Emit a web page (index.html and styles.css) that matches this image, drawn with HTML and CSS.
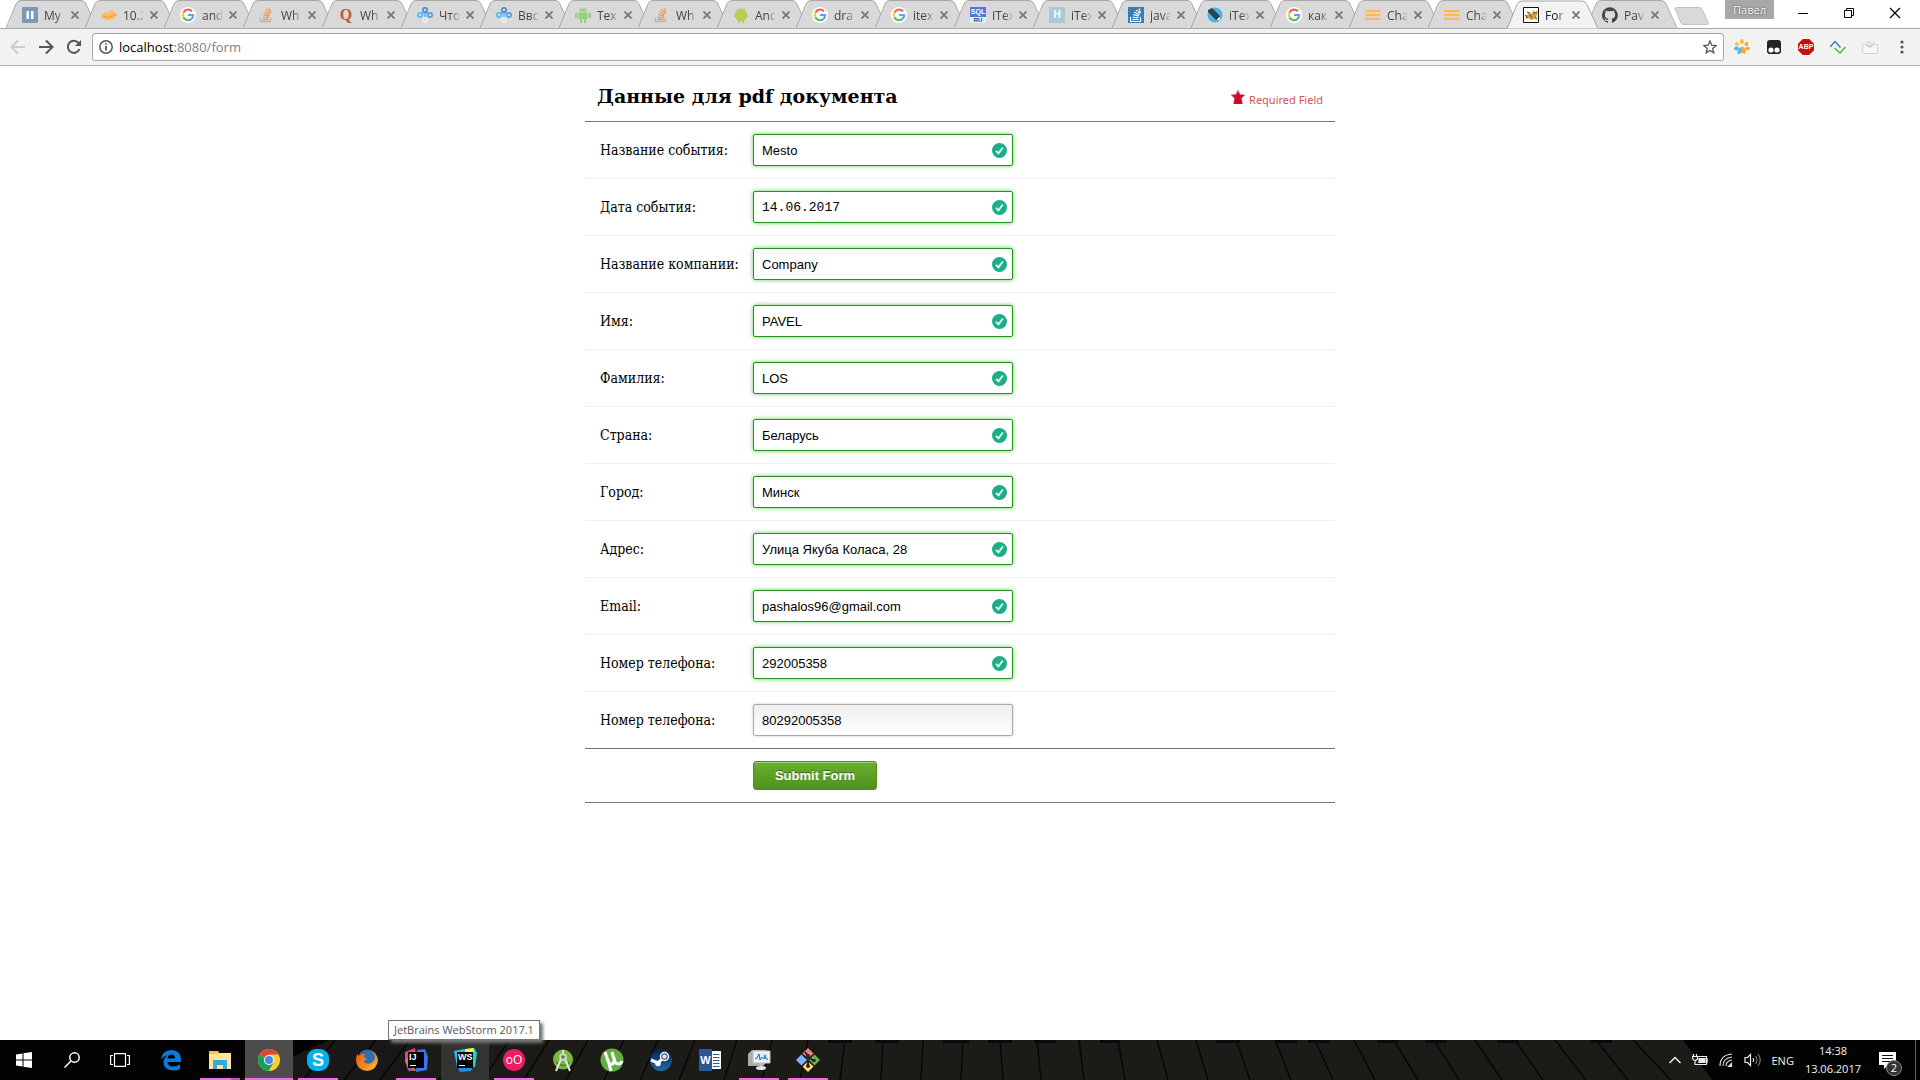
FILE: index.html
```html
<!DOCTYPE html>
<html lang="ru">
<head>
<meta charset="utf-8">
<title>Form</title>
<link rel="stylesheet" href="styles.css">
</head>
<body>
<svg class="defs" aria-hidden="true">
  <defs>
    <linearGradient id="lg-blue" x1="0" y1="0" x2="0" y2="1"><stop offset="0" stop-color="#0b2150"/><stop offset="1" stop-color="#1f6aa8"/></linearGradient>
    <linearGradient id="lg-fox" x1="0" y1="0" x2="1" y2="1"><stop offset="0" stop-color="#e8590c"/><stop offset=".6" stop-color="#f58a1f"/><stop offset="1" stop-color="#fdd33c"/></linearGradient>
  </defs>
  <symbol id="shape" viewBox="0 0 92 28"><path d="M0 28C1 27 2 25 3 23L10 4Q11.500.500 15 .500H75Q78.500.500 80 4L88 23Q90 27.500 92 28Z" stroke="none"/><path d="M0 28L10 4Q11.500.500 15 .500H75Q78.500.500 80 4L91 28" fill="none"/></symbol>
  <symbol id="x" viewBox="0 0 8 8"><path d="M.5.5l7 7M7.500.500l-7 7" stroke="#777" stroke-width="1.800"/></symbol>
  <symbol id="google" viewBox="0 0 16 16"><circle cx="8" cy="8" r="8" fill="#fff"/><g fill="none" stroke-width="2.200"><path d="M12 4.300A5.200 5.200 0 0 0 3.500 5.400" stroke="#ee675c"/><path d="M3.500 5.400A5.200 5.200 0 0 0 3.500 10.600" stroke="#fbc94a"/><path d="M3.500 10.600A5.200 5.200 0 0 0 11.500 11.900" stroke="#5bb974"/><path d="M11.500 11.900Q13.200 10.400 13.100 8H8" stroke="#669df6"/></g></symbol>
  <symbol id="stack" viewBox="0 0 16 16"><path d="M1.500 10.500v4h10v-4" fill="none" stroke="#b4b6b8" stroke-width="1.300"/><path d="M3.500 12.500h6M3.700 10.200l6 .7M4.300 7.600l5.800 1.700M5.200 4.800l5 3.300M7 2.300l4.300 4.700M9.800.800l2.200 5" stroke="#f29a5b" stroke-width="1.300"/></symbol>
  <symbol id="stackru" viewBox="0 0 16 16"><path d="M0 0h16v16H0z" fill="#3a7db3"/><path d="M2.500 10v4.500h10V10M4.500 12.500h6M4.500 10.200l6 .5M5 7.500l5.700 1.600M6.200 5l5 3M8.300 2.800l3.700 4M11 1.500l1.500 4.500" fill="none" stroke="#fff" stroke-width="1.100"/></symbol>
  <symbol id="dots3" viewBox="0 0 16 16"><g fill="none" stroke-width="1.800"><path d="M5 7l2-2M11 7L9 5M8 6v4" stroke="#5a9be0" stroke-width="1.200"/><circle cx="8" cy="3" r="2.200" stroke="#4d8fe0"/><circle cx="3" cy="8" r="2.200" stroke="#4fc0f5"/><circle cx="13" cy="8" r="2.200" stroke="#4da4ee"/><circle cx="8" cy="13" r="2.200" stroke="#ebebeb"/></g></symbol>
  <symbol id="android" viewBox="0 0 16 16"><path d="M4 4.500Q4.500 1.500 8 1.500T12 4.500z"/><path d="M3.500 5.500h9V12h-9zM0 6h2.500v5H0zM13.500 6H16v5h-2.500zM5 12h2v4H5zM9 12h2v4H9z"/><path d="M5 .5l1 2M11 .5l-1 2" stroke="#96cf80"/></symbol>
  <symbol id="lines" viewBox="0 0 16 16"><path d="M0 4.200h15.500M0 8h15.500M0 11.800h15.500" stroke="#fcb95b" stroke-width="2.200"/></symbol>
  <symbol id="ok" viewBox="0 0 16 16"><circle cx="8" cy="8" r="8" fill="#1cae88"/><path d="M4.300 8.300l2.600 2.700 4.700-6.200" fill="none" stroke="#e6faf4" stroke-width="2"/></symbol>
</svg>

<header class="browser">
  <div class="titlebar">
    <ul class="tabs">
      <li class="tab"><svg class="shape"><use href="#shape"/></svg><svg class="fav" viewBox="0 0 16 16"><rect width="16" height="16" rx="1" fill="#7b98b8"/><path d="M4.500 4h2.500v8H4.500zM9 4h2.500v8H9z" fill="#fff"/></svg><span class="name">My</span><svg class="x"><use href="#x"/></svg></li>
      <li class="tab"><svg class="shape"><use href="#shape"/></svg><svg class="fav" viewBox="0 0 16 16"><path d="M0 9Q2 5 7 5Q10 2 13 3L12 5Q16 6 16 8Q13 13 7 13Q1 13 0 9z" fill="#f9bd62"/><path d="M2 9Q8 12 15 7" stroke="#ee9b36" fill="none"/></svg><span class="name">10.2</span><svg class="x"><use href="#x"/></svg></li>
      <li class="tab"><svg class="shape"><use href="#shape"/></svg><svg class="fav"><use href="#google"/></svg><span class="name">and</span><svg class="x"><use href="#x"/></svg></li>
      <li class="tab"><svg class="shape"><use href="#shape"/></svg><svg class="fav"><use href="#stack"/></svg><span class="name">Wh</span><svg class="x"><use href="#x"/></svg></li>
      <li class="tab"><svg class="shape"><use href="#shape"/></svg><span class="fav quora">Q</span><span class="name">Wh</span><svg class="x"><use href="#x"/></svg></li>
      <li class="tab"><svg class="shape"><use href="#shape"/></svg><svg class="fav"><use href="#dots3"/></svg><span class="name">Что</span><svg class="x"><use href="#x"/></svg></li>
      <li class="tab"><svg class="shape"><use href="#shape"/></svg><svg class="fav"><use href="#dots3"/></svg><span class="name">Ввс</span><svg class="x"><use href="#x"/></svg></li>
      <li class="tab"><svg class="shape"><use href="#shape"/></svg><svg class="fav droid"><use href="#android"/></svg><span class="name">Tex</span><svg class="x"><use href="#x"/></svg></li>
      <li class="tab"><svg class="shape"><use href="#shape"/></svg><svg class="fav"><use href="#stack"/></svg><span class="name">Wh</span><svg class="x"><use href="#x"/></svg></li>
      <li class="tab"><svg class="shape"><use href="#shape"/></svg><svg class="fav" viewBox="0 0 16 16"><path d="M4 1l1.500 1Q8 1 10.500 2L12 1v2Q13.500 4 13.500 6.500h1.200v4h-1.200Q13 13 11 13.500V16H9v-2H7v2H5v-2.500Q3 13 2.500 10.500H1.300v-4h1.200Q2.500 4 4 3z" fill="#b3cf58"/></svg><span class="name">And</span><svg class="x"><use href="#x"/></svg></li>
      <li class="tab"><svg class="shape"><use href="#shape"/></svg><svg class="fav"><use href="#google"/></svg><span class="name">dra</span><svg class="x"><use href="#x"/></svg></li>
      <li class="tab"><svg class="shape"><use href="#shape"/></svg><svg class="fav"><use href="#google"/></svg><span class="name">itex</span><svg class="x"><use href="#x"/></svg></li>
      <li class="tab"><svg class="shape"><use href="#shape"/></svg><span class="fav sql"><b>SQL</b><i>RU</i></span><span class="name">ITex</span><svg class="x"><use href="#x"/></svg></li>
      <li class="tab"><svg class="shape"><use href="#shape"/></svg><span class="fav habr">H</span><span class="name">iTex</span><svg class="x"><use href="#x"/></svg></li>
      <li class="tab"><svg class="shape"><use href="#shape"/></svg><svg class="fav"><use href="#stackru"/></svg><span class="name">java</span><svg class="x"><use href="#x"/></svg></li>
      <li class="tab"><svg class="shape"><use href="#shape"/></svg><svg class="fav" viewBox="0 0 16 16"><circle cx="8" cy="8" r="7.500" fill="#47b5e6"/><path d="M1 3l4-2 8 8v4H9L1 5z" fill="#34424e"/><path d="M9.500 13l3.500-3.500v3.500z" fill="#fff"/></svg><span class="name">iTex</span><svg class="x"><use href="#x"/></svg></li>
      <li class="tab"><svg class="shape"><use href="#shape"/></svg><svg class="fav"><use href="#google"/></svg><span class="name">как</span><svg class="x"><use href="#x"/></svg></li>
      <li class="tab"><svg class="shape"><use href="#shape"/></svg><svg class="fav"><use href="#lines"/></svg><span class="name">Cha</span><svg class="x"><use href="#x"/></svg></li>
      <li class="tab"><svg class="shape"><use href="#shape"/></svg><svg class="fav"><use href="#lines"/></svg><span class="name">Cha</span><svg class="x"><use href="#x"/></svg></li>
      <li class="tab active"><svg class="shape"><use href="#shape"/></svg><svg class="fav" viewBox="0 0 16 16"><path d="M.5.5h15v15H.5z" fill="#fff" stroke="#111"/><path d="M2 12l1-4 3-1-3-2 4 1 2 1 1-4 2 2 3-2-1 5-1 2 2 3-4-1-3 1-3-2z" fill="#d2a049"/><path d="M2 8l3 3M7 7l2 4M4 5l3 1M11 5v2M13 5v2M12 10l2 1" stroke="#6b5126"/></svg><span class="name">For</span><svg class="x"><use href="#x"/></svg></li>
      <li class="tab"><svg class="shape"><use href="#shape"/></svg><svg class="fav" viewBox="0 0 16 16"><path d="M8 .2a8 8 0 0 0-2.500 15.600c.4.100.5-.2.500-.4v-1.500c-2.200.5-2.700-1-2.700-1-.4-.9-.9-1.200-.9-1.200-.7-.5.100-.5.100-.5.800.1 1.200.8 1.200.8.700 1.200 1.900.9 2.300.7.100-.5.300-.9.500-1.100-1.800-.2-3.600-.9-3.600-3.900 0-.9.300-1.600.8-2.200-.1-.2-.4-1 .1-2.100 0 0 .7-.2 2.200.8a7.600 7.600 0 0 1 4 0c1.500-1 2.200-.8 2.200-.8.400 1.100.2 1.900.1 2.100.500.600.800 1.300.800 2.200 0 3.100-1.900 3.700-3.700 3.900.3.300.6.800.6 1.500v2.200c0 .2.100.5.600.4A8 8 0 0 0 8 .2z" fill="#444"/></svg><span class="name">Pav</span><svg class="x"><use href="#x"/></svg></li>
    </ul>
    <button class="newtab" aria-label="New tab"><svg width="36" height="18" viewBox="0 0 36 18"><path d="M1 1.500Q1 .5 3 .5H25Q27 .5 28 2L34 15Q35 17.500 33 17.500H10Q8 17.500 7 16z" fill="#d9d9d9" stroke="#c2c2c2"/></svg></button>
    <div class="window">
      <button class="user">Павел</button>
      <button class="win" aria-label="Minimize"><svg width="12" height="12"><path d="M1 6.500h10" stroke="#000"/></svg></button>
      <button class="win" aria-label="Restore"><svg width="12" height="12" fill="none" stroke="#000"><path d="M1.500 3.500h7v7h-7zM3.500 3.500v-2h7v7h-2"/></svg></button>
      <button class="win" aria-label="Close"><svg width="12" height="12"><path d="M1 1l10 10M11 1L1 11" stroke="#000" stroke-width="1.200"/></svg></button>
    </div>
  </div>
  <div class="toolbar">
    <button class="nav" aria-label="Back"><svg width="16" height="16" fill="none" stroke="#ccc" stroke-width="2"><path d="M15 8H2M8 1.500L1.500 8 8 14.500"/></svg></button>
    <button class="nav" aria-label="Forward"><svg width="16" height="16" fill="none" stroke="#555" stroke-width="2"><path d="M1 8h13M8 1.500L14.500 8 8 14.500"/></svg></button>
    <button class="nav" aria-label="Reload"><svg width="16" height="16" fill="none" stroke="#555" stroke-width="2"><path d="M13.500 10A6 6 0 1 1 12.500 4"/><path d="M15 1v6H9z" fill="#555" stroke="none"/></svg></button>
    <div class="omnibox">
      <svg width="14" height="14" fill="none" stroke="#555" stroke-width="1.500"><circle cx="7" cy="7" r="6.200"/><path d="M7 6v4.500M7 3.200v1.600" stroke-width="1.800"/></svg>
      <span class="url"><b>localhost</b>:8080/form</span>
      <svg width="14" height="14" viewBox="0 0 14 14"><path d="M7 1l1.700 4.200 4.500.3-3.500 2.900 1.100 4.400L7 10.400l-3.800 2.400 1.100-4.400L.8 5.500l4.500-.3z" fill="none" stroke="#555" stroke-width="1.300"/></svg>
    </div>
    <div class="exts">
      <svg width="16" height="16"><ellipse cx="8" cy="2.500" rx="1.800" ry="2.500" fill="#fcb937"/><ellipse cx="12.500" cy="5" rx="2" ry="2.200" fill="#fcae37"/><ellipse cx="13.500" cy="9.500" rx="2.200" ry="1.700" fill="#f9a02f"/><ellipse cx="3" cy="5" rx="2" ry="2" fill="#ffc04a"/><ellipse cx="2.500" cy="9.500" rx="2.500" ry="2" fill="#55b8ee"/><path d="M4 15Q3 11 7 8q4-1 5 4l-1 3-3-1z" fill="#f9a832"/><path d="M3.500 15Q3 11 7 8v6z" fill="#56b4ea"/></svg>
      <svg width="16" height="16"><rect x="1" y="1" width="14" height="14" rx="3" fill="#222"/><circle cx="5" cy="11" r="2.600" fill="#fff"/><circle cx="11" cy="11" r="2.600" fill="#fff"/></svg>
      <span class="abp">ABP</span>
      <svg width="16" height="16" fill="none" stroke-width="1.500"><path d="M0 8l5-5.500 5.500 6" stroke="#4775a8"/><path d="M4.500 9l5.500 5 5.500-6" stroke="#41c221"/></svg>
      <svg width="16" height="16"><path d="M.5 5.500h15v9H.5z" fill="#f6f6f6" stroke="#d3d3d3"/><path d="M2 5l3-3h7l2 3-6 4z" fill="#e5e5e5"/><path d="M4 6l4 2 4-3" stroke="#bbb" fill="none"/></svg>
      <svg width="16" height="16" fill="#555"><circle cx="8" cy="3" r="1.600"/><circle cx="8" cy="8" r="1.600"/><circle cx="8" cy="13" r="1.600"/></svg>
    </div>
  </div>
</header>

<main class="page">
  <form class="form">
    <div class="head">
      <h1>Данные для pdf документа</h1>
      <span class="required"><svg width="16" height="16" viewBox="0 0 16 16"><path d="M8 1l2.200 4.500 4.800.5-3.500 3.300L12.600 15H3.400l1.100-5.700L1 6l4.800-.5z" fill="#cf0a2c"/><path d="M1.500 5.800l4.300-.5L8 1.200l2.200 4.100 4.300.5" fill="none" stroke="#e0919f"/></svg>Required Field</span>
    </div>
    <div class="row"><label for="f1">Название события:</label><div class="field"><input id="f1" value="Mesto"><svg class="ok"><use href="#ok"/></svg></div></div>
    <div class="row"><label for="f2">Дата события:</label><div class="field"><input id="f2" class="date" value="14.06.2017"><svg class="ok"><use href="#ok"/></svg></div></div>
    <div class="row"><label for="f3">Название компании:</label><div class="field"><input id="f3" value="Company"><svg class="ok"><use href="#ok"/></svg></div></div>
    <div class="row"><label for="f4">Имя:</label><div class="field"><input id="f4" value="PAVEL"><svg class="ok"><use href="#ok"/></svg></div></div>
    <div class="row"><label for="f5">Фамилия:</label><div class="field"><input id="f5" value="LOS"><svg class="ok"><use href="#ok"/></svg></div></div>
    <div class="row"><label for="f6">Страна:</label><div class="field"><input id="f6" value="Беларусь"><svg class="ok"><use href="#ok"/></svg></div></div>
    <div class="row"><label for="f7">Город:</label><div class="field"><input id="f7" value="Минск"><svg class="ok"><use href="#ok"/></svg></div></div>
    <div class="row"><label for="f8">Адрес:</label><div class="field"><input id="f8" value="Улица Якуба Коласа, 28"><svg class="ok"><use href="#ok"/></svg></div></div>
    <div class="row"><label for="f9">Email:</label><div class="field"><input id="f9" type="email" value="pashalos96@gmail.com"><svg class="ok"><use href="#ok"/></svg></div></div>
    <div class="row"><label for="f10">Номер телефона:</label><div class="field"><input id="f10" type="tel" value="292005358"><svg class="ok"><use href="#ok"/></svg></div></div>
    <div class="row last"><label for="f11">Номер телефона:</label><div class="field"><input id="f11" class="plain" type="tel" value="80292005358"></div></div>
    <div class="row last"><span></span><button class="submit" type="submit">Submit Form</button></div>
  </form>
</main>

<footer class="taskbar">
  <svg class="wood" viewBox="0 0 1920 40" preserveAspectRatio="none" aria-hidden="true">
    <path d="M240 40L330 0H1683L1712 40z" fill="#191816"/>
    <path d="M430 0H1683L1712 40H400z" fill="#1d1b18"/>
    <path d="M335 0l-32 40M376 0l-32 40M410 0l-30 40M467 0l-28 40M509 0l-26 40M549 0l-25 40M588 0l-22 40M624 0l-20 40M658 0l-18 40M695 0l-16 40M737 0l-13 40M772 0l-10 40M808 0l-8 40M845 0l-5 40M883 0l-2 40M923 0l-2 40M963 0l-2 40M1000 0l3 40M1037 0l4 40M1079 0l5 40M1118 0l7 40M1157 0l11 40M1196 0l12 40M1236 0l14 40M1275 0l16 40M1315 0l18 40M1354 0l21 40M1394 0l24 40M1434 0l25 40M1475 0l27 40M1515 0l28 40M1555 0l31 40M1596 0l32 40M1633 0l38 40" stroke="#080706" stroke-width="1.500"/>
    <path d="M828 1h24M875 1h24M943 1h26M988 1h24M1034 1h22M1100 1h20M1216 1h24M1275 1h22M1308 1h22M1377 1h22M1425 1h22M1497 1h22M1590 1h22" stroke="#080a0d" stroke-width="4"/>
  </svg>
  <div class="tasks">
    <button class="task" aria-label="Start"><svg width="16" height="16" fill="#fff"><path d="M0 2.500l6.500-1v6H0zM7.500 1.300L16 0v7.500H7.500zM0 8.500h6.500v6L0 13.500zM7.500 8.500H16V16l-8.500-1.300z"/></svg></button>
    <button class="task" aria-label="Search"><svg width="16" height="16" fill="none" stroke="#fff" stroke-width="1.500"><circle cx="10.500" cy="5.500" r="4.700"/><path d="M7 9l-6.500 6.500"/></svg></button>
    <button class="task" aria-label="Task view"><svg width="20" height="14" fill="none" stroke="#fff" stroke-width="1.200"><path d="M4.500.6h11v12.800h-11zM3 2.500H.6v9H3M17 2.500h2.400v9H17"/></svg></button>
    <button class="task app" aria-label="Edge"><svg width="22" height="22"><path d="M1 11Q2 1 11.500 1Q21 1.500 21 11v2H7.500Q8 17.500 13 17.500Q17 17.500 20 15.500V20Q17 21.500 13 21.500Q3.500 21 3.500 13Q3.500 9 7.500 6.500Q3 7 1 11zM7.500 9.500H15Q15 5.500 11.500 5.500Q8 5.500 7.500 9.500z" fill="#0b7ad8" fill-rule="evenodd"/></svg></button>
    <button class="task app run multi" aria-label="Explorer"><svg width="22" height="20"><path d="M0 1h9l1 2h12v16H0z" fill="#ffe595"/><path d="M0 1h9l1 3H0z" fill="#f5c842"/><path d="M4 10h14v9h-4v-4H8v4H4z" fill="#36a9dc"/></svg></button>
    <button class="task app hot full" aria-label="Chrome"><svg width="22" height="22" viewBox="0 0 22 22"><circle cx="11" cy="11" r="11" fill="#fbcf2e"/><path d="M11 11L1.500 5.500A11 11 0 0 1 20.500 5.500H11z" fill="#dc4538"/><path d="M11 11L1.500 5.500A11 11 0 0 0 10.500 22l5-8z" fill="#1a9f5b"/><circle cx="11" cy="11" r="5" fill="#fff"/><circle cx="11" cy="11" r="4" fill="#4a86ef"/></svg></button>
    <button class="task app run" aria-label="Skype"><span class="skype">S</span></button>
    <button class="task app" aria-label="Firefox"><svg width="22" height="22"><circle cx="11.500" cy="10" r="9.500" fill="#2b6fb5"/><path d="M1 5l2 2Q5 4 9 5L8 8l3 2q-3 1-3 3 3 3 7 1 4-2 4-6-1-4-4-6 6 2 7 9-1 10-11 11Q1 21 0 12q0-4 1-7z" fill="url(#lg-fox)"/></svg></button>
    <button class="task app run" aria-label="IntelliJ IDEA"><svg width="24" height="24"><path d="M1 4l10-4 2 13-6 10-6-9z" fill="#e0437c"/><path d="M13 2l8-1 3 8-1 13-11 2z" fill="#3274f5"/><path d="M1 12l4-3 7 14-8-1z" fill="#d67b45"/><path d="M4 20l6-1-5 5z" fill="#a04ad4"/></svg><b class="jb">IJ</b></button>
    <button class="task app hot" aria-label="WebStorm"><svg width="24" height="24"><path d="M1 3l10-2 9 5-6 16-10-3z" fill="#19c7e8"/><path d="M14 1l7-1 3 5-2 14-10 2z" fill="#1fd1c5"/><path d="M12 1l9-1-1 7-8 1z" fill="#f4f04c"/><path d="M4 18l16 1-2 4-11 1z" fill="#1795d9"/></svg><b class="jb">WS</b></button>
    <button class="task app run" aria-label="oO"><span class="oo">oO</span></button>
    <button class="task app" aria-label="Android Studio"><svg width="22" height="23"><circle cx="11" cy="10.500" r="10" fill="#78b83c"/><path d="M4 13q7 7 14 0" stroke="#55783a" stroke-width="1.500" fill="none"/><path d="M10 1h2v4h-2z" fill="#dedede"/><path d="M9 10L4 22M13 10l5 12" stroke="#e4e8df" stroke-width="2" fill="none"/><circle cx="11" cy="8" r="3.800" fill="#d2d6ce"/><circle cx="11" cy="8" r="1.700" fill="#55783a"/></svg></button>
    <button class="task app" aria-label="uTorrent"><svg width="24" height="24"><circle cx="12" cy="12" r="11.500" fill="#63ad42"/><path d="M5 4l3 9q1 4 4 3t2-5l-2-7M14 10q1 6 4 6 3 0 4-3M8 12l3 11" stroke="#fff" stroke-width="3" fill="none"/></svg></button>
    <button class="task app" aria-label="Steam"><svg width="22" height="22"><circle cx="11" cy="11" r="11" fill="url(#lg-blue)"/><path d="M1 11l7 3 6-6" stroke="#fff" stroke-width="3" fill="none"/><circle cx="14.500" cy="7.500" r="4" fill="#1c4278" stroke="#fff" stroke-width="1.500"/><circle cx="14.500" cy="7.500" r="2.300" fill="#dfe6f0"/><circle cx="8" cy="14.500" r="2.800" fill="#fff"/></svg></button>
    <button class="task app" aria-label="Word"><span class="word"><b>W</b><svg width="9" height="18"><path d="M0 0h9v18H0z" fill="#fff"/><path d="M1 3.500h6.500M1 6.500h6.500M1 9.500h6.500M1 12.500h6.500M1 15.500h6.500" stroke="#2a5699"/></svg></span></button>
    <button class="task app run" aria-label="Monitor"><svg width="24" height="22"><path d="M1 5l4-4h14v13l-3 3H1z" fill="#a9adb0"/><path d="M6 2h17v12H6z" fill="#f2f5f7" stroke="#b9bdc0"/><path d="M8 4h13v8H8z" fill="#dcecf8"/><path d="M8 10l2-1 2-4 1 6 2-3 2 2 1-4 1 4 2 0" stroke="#1d6cae" fill="none"/><path d="M12 14h4v3h-4z" fill="#bbb"/><ellipse cx="14" cy="19" rx="5" ry="2" fill="#e4e4e4"/></svg></button>
    <button class="task app run" aria-label="Git"><svg width="24" height="24"><path d="M12 0l5.500 5.500-5.500 5-5.500-5z" fill="#f27e7e"/><path d="M5.500 6.500l5.500 5.500-5.500 5.500L0 12z" fill="#7fb0ff"/><path d="M18.500 6.500L24 12l-5.500 5.500L13 12z" fill="#6ab546"/><path d="M12 13.500l5.500 5L12 24l-5.500-5.500z" fill="#ffe07a"/><path d="M9 4l3 4v10M12 9l6 4" stroke="#262626" stroke-width="2" fill="none"/><circle cx="12" cy="8" r="2" fill="#262626"/><circle cx="12" cy="18" r="2" fill="#262626"/><circle cx="18" cy="12.500" r="1.800" fill="#262626"/></svg></button>
  </div>
  <div class="tray">
    <svg width="12" height="8"><path d="M.5 7L6 1.500 11.500 7" fill="none" stroke="#eee" stroke-width="1.500"/></svg>
    <svg width="16" height="14" fill="none" stroke="#eee" stroke-width="1.200"><path d="M6 3.500h8.500v8H5M14.500 6h1.500v3h-1.500"/><path d="M7 5.500h6v4H7z" fill="#eee"/><path d="M1.500 1v2M4.500 1v2M.5 3.500h5v1.500q0 2-2.500 2.500Q.5 7 .5 5zM3 7.500v4h2"/></svg>
    <svg width="14" height="14" fill="none" stroke="#ddd" stroke-width="1.200"><path d="M1 13Q1 2 13 1M4 13Q4 5 13 4M7 13Q7 8 13 7" /><path d="M9.500 13.500l3-3v3z" fill="#fff"/></svg>
    <svg width="17" height="14" fill="none" stroke="#eee" stroke-width="1.200"><path d="M1 4.500h2.500l3-3v11l-3-3H1z"/><path d="M9 5q1.500 2 0 4"/><path d="M11.500 3q3 4 0 8M14 1q4.500 6 0 12" stroke="#777"/></svg>
    <span class="lang">ENG</span>
    <time class="clock"><span>14:38</span><span>13.06.2017</span></time>
    <button class="notes" aria-label="Notifications"><svg width="17" height="17"><path d="M0 0h17v13h-8l-4 4v-4H0z" fill="#fff"/><path d="M3 3.500h11M3 6.500h11M3 9.500h8" stroke="#111"/></svg><span class="badge">2</span></button>
  </div>
  <span class="tooltip">JetBrains WebStorm 2017.1</span>
</footer>
</body>
</html>
```
FILE: styles.css
```css
* { box-sizing: border-box; }
body {
  margin: 0;
  min-height: 100vh;
  display: flex;
  flex-direction: column;
  background: #fff;
  color: #000;
  font-family: "Open Sans", "Noto Sans", sans-serif;
}
button { border: 0; padding: 0; background: none; font-family: inherit; color: inherit; }
svg { display: block; flex: none; }
.defs { position: absolute; width: 0; height: 0; }

/* Tab strip */
.titlebar { display: flex; height: 29px; border-bottom: 1px solid #a9a9a9; }
.tabs { display: flex; margin: 0; padding: 0 0 0 6px; list-style: none; }
.tab {
  position: relative;
  width: 79px;
  height: 28px;
  padding: 2px 0 0 16px;
  display: flex;
  align-items: center;
  font-size: 12px;
  color: #444;
}
.shape { position: absolute; left: 0; top: 0; width: 92px; height: 28px; fill: #d9d9d9; stroke: #a6a6a6; }
.active { z-index: 1; color: #222; }
.active .shape { fill: #f2f2f2; height: 29px; }
.fav { position: relative; width: 16px; height: 16px; flex: none; }
.droid { fill: #96cf80; }
.name {
  position: relative;
  width: 20px;
  margin: 0 7px 0 6px;
  overflow: hidden;
  white-space: nowrap;
  -webkit-mask-image: linear-gradient(90deg, #000 60%, rgba(0, 0, 0, .2));
  mask-image: linear-gradient(90deg, #000 60%, rgba(0, 0, 0, .2));
}
.x { position: relative; width: 8px; height: 8px; }
.quora { font: bold 16px/16px "Liberation Serif", serif; color: #c5523f; text-align: center; }
.sql { display: flex; flex-direction: column; font: bold 7px/10px "Liberation Sans", sans-serif; text-align: center; background: #4c7bd9; color: #fff; }
.sql i { background: #d8f1fc; color: #1c3f6e; font-style: normal; font-size: 6px; line-height: 6px; }
.habr { background: #a7cad4; color: #fff; font: bold 10px/16px "Liberation Sans", sans-serif; text-align: center; }
.newtab { width: 36px; margin-left: 9px; padding-top: 7px; align-self: flex-start; }
.window { display: flex; align-items: flex-start; margin-left: auto; padding-right: 2px; }
.user { width: 49px; height: 19px; margin-right: 6px; background: #a8a8a8; color: #fff; font-size: 11px; text-shadow: 0 0 2px #333; }
.win { width: 46px; height: 26px; display: flex; align-items: center; justify-content: center; }

/* Toolbar */
.toolbar { display: flex; align-items: center; height: 37px; padding: 0 10px; background: #f2f2f2; border-bottom: 1px solid #b0b0b0; }
.nav { width: 16px; margin-right: 12px; }
.omnibox { flex: 1; display: flex; align-items: center; height: 28px; margin-right: 10px; margin-left: -2px; padding: 0 6px; background: #fff; border: 1px solid #a9a9a9; border-radius: 3px; }
.url { flex: 1; padding-left: 6px; font-size: 13px; line-height: 20px; color: #808080; }
.url b { font-weight: normal; color: #000; }
.exts { display: flex; gap: 16px; align-items: center; }
.abp {
  width: 16px;
  height: 16px;
  background: #c70d0d;
  clip-path: polygon(30% 0, 70% 0, 100% 30%, 100% 70%, 70% 100%, 30% 100%, 0 70%, 0 30%);
  color: #fff;
  font: bold 7px/16px "Liberation Sans", sans-serif;
  text-align: center;
}

/* Form */
.page { flex: 1; padding: 0 16px; }
.form { max-width: 750px; margin: 0 auto; font-family: Georgia, "DejaVu Serif Condensed", serif; font-size: 14px; }
.head { display: flex; justify-content: space-between; align-items: center; height: 56px; padding: 4px 12px 0; border-bottom: 1px solid #777; }
.head h1 { margin: 0; font-family: Georgia, "DejaVu Serif", serif; font-size: 19px; line-height: 28px; }
.required { display: flex; align-items: center; gap: 3px; padding-top: 8px; color: #d45252; font-family: "Noto Sans", sans-serif; font-size: 11px; line-height: 16px; }
.required svg { margin-bottom: 5px; }
.row { display: grid; grid-template-columns: 153px 1fr; align-items: center; padding: 12px 0 12px 15px; border-bottom: 1px solid #eee; }
.last { border-bottom-color: #777; }
.row label { line-height: 20px; }
.field { position: relative; width: 260px; }
.field input {
  display: block;
  width: 100%;
  height: 32px;
  padding: 0 30px 0 8px;
  border: 1px solid #28921f;
  border-radius: 2px;
  background: #fff;
  box-shadow: 0 0 4px #5cd053;
  font-family: "Liberation Sans", sans-serif;
  font-size: 13px;
  color: #000;
}
.field .date { font-family: "Liberation Mono", monospace; }
.field .plain { border-color: #aaa; background: linear-gradient(#eee, #fff); box-shadow: 0 0 3px #ccc; }
.ok { position: absolute; right: 6px; top: 9px; width: 15px; height: 15px; }
.submit {
  width: 124px;
  height: 29px;
  border: 1px solid #509111;
  border-radius: 3px;
  background: linear-gradient(#68b12f, #50911e);
  box-shadow: inset 0 1px 0 #9fd574;
  color: #fff;
  font: bold 13px/15px "Liberation Sans", sans-serif;
  text-shadow: 0 -1px 0 #396715;
}

/* Taskbar */
.taskbar { position: relative; display: flex; justify-content: space-between; height: 40px; background: #030303; color: #f2f2f2; }
.wood { position: absolute; left: 0; top: 0; width: 100%; height: 100%; }
.tasks { position: relative; display: flex; }
.task { position: relative; width: 48px; height: 40px; display: flex; align-items: center; justify-content: center; }
.app { margin-right: 1px; }
.app:nth-child(4) { margin-left: 3px; }
.run::after { content: ""; position: absolute; left: 4px; right: 4px; bottom: 0; height: 2px; background: #f06fe0; }
.multi::after { background: linear-gradient(90deg, #f06fe0 31px, #b45aa9 31px); }
.hot { background: #333331; }
.full { background: #4c4c4c; }
.full::after { content: ""; position: absolute; left: 0; right: 0; bottom: 0; height: 2px; background: #f06fe0; }
.skype { width: 22px; height: 22px; border-radius: 9px; background: #0ab0ed; color: #fff; font: bold 18px/22px "Liberation Sans", sans-serif; }
.jb { position: absolute; left: 16px; top: 12px; width: 16px; height: 16px; padding-left: 1px; background: #000; color: #fff; font: bold 9px/11px "Liberation Sans", sans-serif; text-align: left; }
.jb::after { content: ""; position: absolute; left: 2px; bottom: 2px; width: 6px; height: 1px; background: #fff; }
.oo { width: 22px; height: 22px; border-radius: 50%; background: #e91e63; color: #fff; font-size: 12px; line-height: 21px; }
.word { display: flex; align-items: center; }
.word b { width: 13px; height: 22px; background: #2a5699; color: #fff; font: bold 11px/22px "Liberation Sans", sans-serif; }
.tray { position: relative; display: flex; align-items: center; gap: 11px; padding-right: 24px; font-size: 11px; }
.tray::after { content: ""; position: absolute; right: 4px; top: 0; bottom: 0; width: 1px; background: #666; }
.lang { margin-left: -1px; }
.clock { display: flex; flex-direction: column; align-items: center; line-height: 18px; margin-right: 7px; }
.notes { position: relative; }
.badge { position: absolute; left: 7px; top: 8px; width: 16px; height: 16px; border: 1px solid #888; border-radius: 50%; background: #333; color: #fff; font-size: 11px; line-height: 14px; }
.tooltip {
  position: absolute;
  left: 388px;
  bottom: 40px;
  padding: 0 5px;
  border: 1px solid #767676;
  background: #fff;
  box-shadow: 3px 3px 3px #777;
  color: #575757;
  font-size: 11px;
  line-height: 18px;
  white-space: nowrap;
}
```
